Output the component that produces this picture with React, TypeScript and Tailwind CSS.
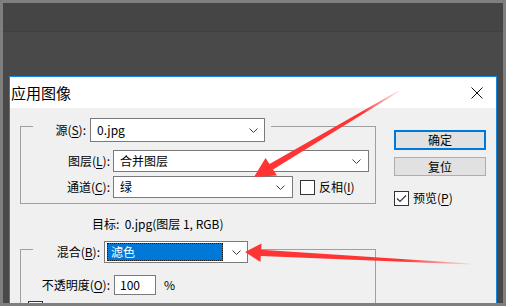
import React from "react";

const Chevron = () => (
  <svg width="9" height="5" viewBox="0 0 9 5" className="shrink-0">
    <path d="M0.5 0.5 L4.5 4.5 L8.5 0.5" fill="none" stroke="#404040" strokeWidth="1" />
  </svg>
);

const Mn = ({ children }: { children: React.ReactNode }) => (
  <span className="underline underline-offset-2">{children}</span>
);

const Select = ({ value, width, mt = "" }: { value: string; width: string; mt?: string }) => (
  <div className={`flex items-center justify-between bg-white border border-[#7a7a7a] h-[22px] pl-[6px] pr-[7px] ${width} ${mt}`}>
    <span>{value}</span>
    <Chevron />
  </div>
);

const CheckBox = ({ checked = false }: { checked?: boolean }) => (
  <div className="w-[15px] h-[15px] border border-[#333333] bg-white shrink-0 flex items-center justify-center">
    {checked && (
      <svg width="13" height="13" viewBox="0 0 13 13">
        <path d="M2 6.5 L5 9.5 L11 3.5" fill="none" stroke="#333333" strokeWidth="1.2" />
      </svg>
    )}
  </div>
);

export default function App() {
  return (
    <div className="relative w-[506px] h-[306px] bg-[#7f7f7f] p-[3px] overflow-hidden font-['Noto_Sans_CJK_SC','Noto_Sans',sans-serif] text-[12px] leading-[16px] text-black">
      <div className="w-full h-full bg-[#494949] overflow-hidden flex flex-col">
        <div className="h-[29px] shrink-0 bg-[#454545] border-b border-[#404040]" />

        {/* dialog */}
        <div className="mt-[44px] ml-[6px] w-[488px] shrink-0 border border-[#1883d7]">
          <div className="h-[31px] bg-white flex items-center justify-between pl-[1px] pr-[13px]">
            <span className="text-[15px] leading-[20px]">应用图像</span>
            <svg width="12" height="12" viewBox="0 0 12 12">
              <path d="M0.5 0.5 L11.5 11.5 M11.5 0.5 L0.5 11.5" stroke="#111111" strokeWidth="1" />
            </svg>
          </div>

          <div className="flex bg-[#f0f0f0] h-[220px]">
            {/* left column */}
            <div className="ml-[10px] w-[356px] pt-[18px] flex flex-col">
              <div className="border border-[#a0a0a0] pb-[5px]">
                <div className="-mt-[9px] ml-[12px] w-fit flex items-center bg-[#f0f0f0] pr-[6px] h-[24px]">
                  <span className="w-[53px] text-right">源(<Mn>S</Mn>):</span>
                  <div className="ml-[4px] flex items-center justify-between bg-white border border-[#7a7a7a] h-[24px] w-[175px] pl-[6px] pr-[6px]">
                    <span>0.jpg</span>
                    <Chevron />
                  </div>
                </div>
                <div className="mt-[8px] flex items-center">
                  <span className="w-[89px] text-right">图层(<Mn>L</Mn>):</span>
                  <div className="ml-[3px]">
                    <Select value="合并图层" width="w-[256px]" />
                  </div>
                </div>
                <div className="mt-[4px] flex items-center">
                  <span className="w-[89px] text-right">通道(<Mn>C</Mn>):</span>
                  <div className="ml-[3px]">
                    <Select value="绿" width="w-[180px]" />
                  </div>
                  <div className="ml-[7px]">
                    <CheckBox />
                  </div>
                  <span className="ml-[4px]">反相(<Mn>I</Mn>)</span>
                </div>
              </div>

              <div className="mt-[12px] ml-[72px]">目标:&nbsp; 0.jpg(图层 1, RGB)</div>

              <div className="mt-[17px] border border-[#a0a0a0] h-[80px]">
                <div className="-mt-[9px] ml-[12px] w-fit flex items-center bg-[#f0f0f0] pr-[6px] h-[22px]">
                  <span className="w-[67px] text-right">混合(<Mn>B</Mn>):</span>
                  <div className="ml-[4px] flex items-center bg-white border border-[#7a7a7a] h-[22px] w-[144px] pl-[2px] pr-[6px]">
                    <div className="h-[18px] w-[116px] bg-[#0078d7] border border-dotted border-[#1a1a1a] flex items-center pl-[3px] text-white">
                      滤色
                    </div>
                    <div className="ml-auto">
                      <Chevron />
                    </div>
                  </div>
                </div>
                <div className="mt-[12px] flex items-center">
                  <span className="w-[89px] text-right">不透明度(<Mn>O</Mn>):</span>
                  <div className="ml-[4px] w-[42px] h-[20px] bg-white border border-[#7a7a7a] flex items-center pl-[5px]">100</div>
                  <span className="ml-[8px]">%</span>
                </div>
                <div className="mt-[6px] ml-[7px]">
                  <CheckBox />
                </div>
              </div>
            </div>

            {/* right column */}
            <div className="ml-[18px] w-[92px] pt-[22px] flex flex-col">
              <div className="h-[20px] border-2 border-[#0078d7] bg-[#e1e1e1] flex items-center justify-center">确定</div>
              <div className="mt-[7px] h-[19px] border border-[#adadad] bg-[#e1e1e1] flex items-center justify-center">复位</div>
              <div className="mt-[14px] flex items-center">
                <CheckBox checked />
                <span className="ml-[4px]">预览(<Mn>P</Mn>)</span>
              </div>
            </div>
          </div>
        </div>
      </div>

      {/* red annotation arrows */}
      <svg className="absolute left-0 top-0 pointer-events-none" width="506" height="306" viewBox="0 0 506 306">
        <defs>
          <linearGradient id="a1" gradientUnits="userSpaceOnUse" x1="254" y1="177" x2="399" y2="91">
            <stop offset="0" stopColor="#ff3535" />
            <stop offset="0.75" stopColor="#ff3535" />
            <stop offset="1" stopColor="#ff3535" stopOpacity="0.1" />
          </linearGradient>
          <linearGradient id="a2" gradientUnits="userSpaceOnUse" x1="245" y1="252" x2="470" y2="264">
            <stop offset="0" stopColor="#ff3535" />
            <stop offset="0.7" stopColor="#ff3535" />
            <stop offset="1" stopColor="#ff3535" stopOpacity="0.1" />
          </linearGradient>
        </defs>
        <polygon
          fill="url(#a1)"
          points="254,177 277,175.5 273,169.5 399.3,91.4 398.7,90.6 269.5,164 265.5,158"
        />
        <polygon
          fill="url(#a2)"
          points="245,252 261.5,243.5 261.2,249.8 470,263.6 470,264.4 260.8,256 260.5,262"
        />
      </svg>
    </div>
  );
}
